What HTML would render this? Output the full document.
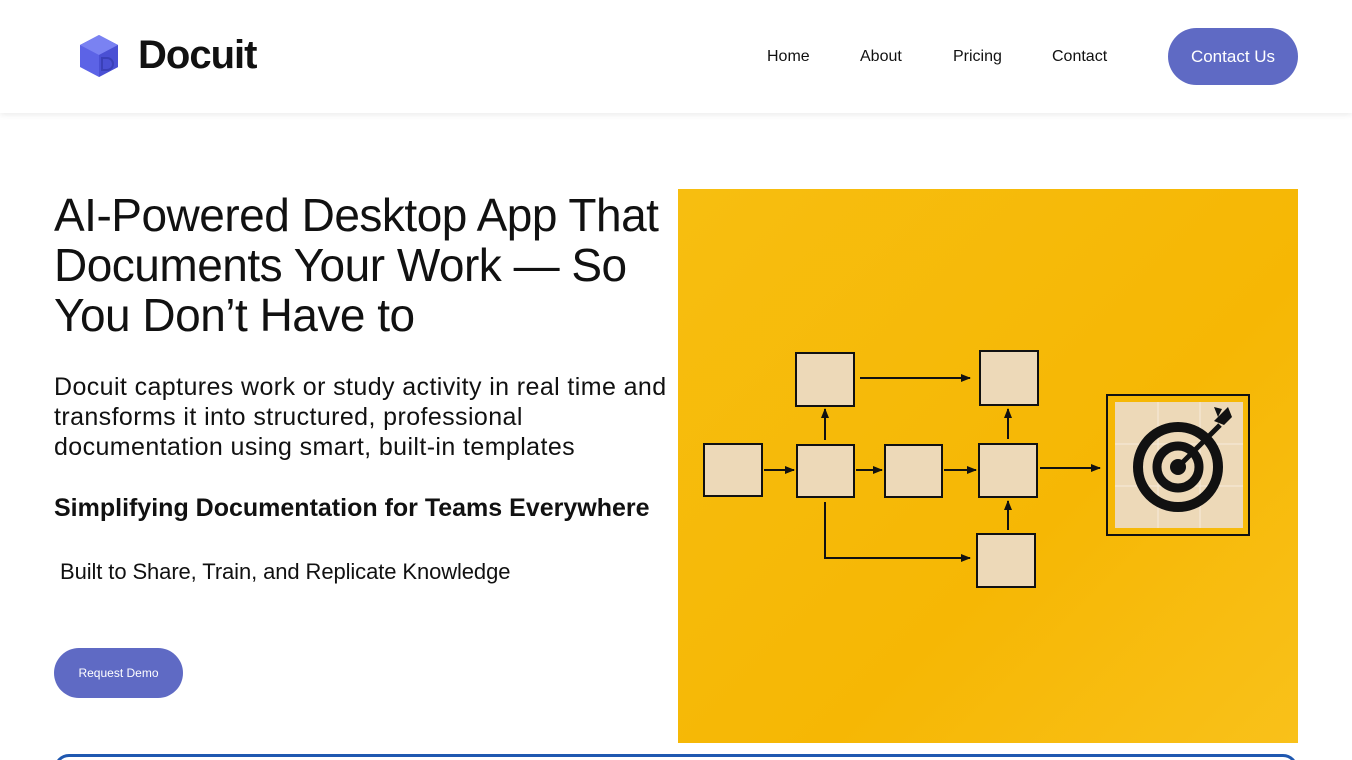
<!DOCTYPE html>
<html><head><meta charset="utf-8"><style>
*{margin:0;padding:0;box-sizing:border-box}
html,body{width:1352px;height:760px;overflow:hidden}
body{background:#fff;font-family:"Liberation Sans",sans-serif;position:relative;color:#111}
.hdr{position:absolute;left:0;top:0;width:1352px;height:113px;background:#fff;box-shadow:0 2px 6px rgba(0,0,0,.08)}
.logo{position:absolute;left:138px;top:33px;font-size:40px;font-weight:700;letter-spacing:-1px;color:#111}
.nav a{position:absolute;top:48px;font-size:16px;color:#111;text-decoration:none}
.cbtn{position:absolute;left:1168px;top:28px;width:130px;height:57px;border-radius:29px;background:#5f6ac4;color:#fff;font-size:17px;text-align:center;line-height:57px}
h1{position:absolute;left:54px;top:190px;width:625px;font-size:46px;font-weight:400;line-height:50px;letter-spacing:-0.5px;color:#111}
.p1{position:absolute;left:54px;top:372px;width:618px;font-size:25px;line-height:30px;letter-spacing:0.4px}
.p2{position:absolute;left:54px;top:494px;font-size:25px;font-weight:700;letter-spacing:0px}
.p3{position:absolute;left:60px;top:559px;font-size:22px;letter-spacing:-0.1px}
.rbtn{position:absolute;left:54px;top:648px;width:129px;height:50px;border-radius:25px;background:#5f6ac4;color:#fff;font-size:12px;text-align:center;line-height:50px}
.img{position:absolute;left:678px;top:189px;width:620px;height:554px;background:linear-gradient(135deg,#f7be10,#f6b704 60%,#f9c11a)}
.bot{position:absolute;left:54px;top:754px;width:1244px;height:30px;border:3px solid #1f58b0;border-radius:16px}
</style></head><body>
<div class="hdr">
<svg style="position:absolute;left:78px;top:34px" width="42" height="44" viewBox="0 0 42 44">
<polygon points="21,1 40,11 40,33 21,43 2,33 2,11" fill="#5c63e6"/>
<polygon points="21,1 40,11 21,21 2,11" fill="#7a82f2"/>
<polygon points="21,21 40,11 40,33 21,43" fill="#4a50d4"/>
<path d="M24,24 h5 a6,6 0 0 1 0,12 h-5 z" fill="none" stroke="#3a40b8" stroke-width="2"/>
</svg>
<div class="logo">Docuit</div>
<div class="nav"><a style="left:767px">Home</a><a style="left:860px">About</a><a style="left:953px">Pricing</a><a style="left:1052px">Contact</a></div>
<div class="cbtn">Contact Us</div>
</div>
<h1>AI-Powered Desktop App That Documents Your Work — So You Don’t Have to</h1>
<div class="p1">Docuit captures work or study activity in real time and transforms it into structured, professional documentation using smart, built-in templates</div>
<div class="p2">Simplifying Documentation for Teams Everywhere</div>
<div class="p3">Built to Share, Train, and Replicate Knowledge</div>
<div class="rbtn">Request Demo</div>
<div class="img">
<svg width="620" height="554" viewBox="0 0 620 554">
<defs><marker id="a" markerWidth="10" markerHeight="8" refX="9" refY="4" orient="auto" markerUnits="userSpaceOnUse"><path d="M0,0 L10,4 L0,8z" fill="#111"/></marker></defs>
<g fill="#edd9b8" stroke="#111" stroke-width="2">
<rect x="26" y="255" width="58" height="52"/><rect x="119" y="256" width="57" height="52"/>
<rect x="118" y="164" width="58" height="53"/><rect x="207" y="256" width="57" height="52"/>
<rect x="302" y="162" width="58" height="54"/><rect x="301" y="255" width="58" height="53"/>
<rect x="299" y="345" width="58" height="53"/>
<rect x="429" y="206" width="142" height="140" fill="none"/>
</g>
<rect x="437" y="213" width="128" height="126" fill="#edd9b8"/>
<g stroke="#fff" stroke-width="1" opacity=".5"><line x1="480" y1="213" x2="480" y2="339"/><line x1="522" y1="213" x2="522" y2="339"/><line x1="437" y1="255" x2="565" y2="255"/><line x1="437" y1="297" x2="565" y2="297"/></g>
<g stroke="#111" stroke-width="2" fill="none" marker-end="url(#a)">
<line x1="86" y1="281" x2="116" y2="281"/><line x1="178" y1="281" x2="204" y2="281"/>
<line x1="266" y1="281" x2="298" y2="281"/><line x1="362" y1="279" x2="422" y2="279"/>
<line x1="147" y1="251" x2="147" y2="220"/><line x1="182" y1="189" x2="292" y2="189"/>
<line x1="330" y1="250" x2="330" y2="220"/><line x1="330" y1="341" x2="330" y2="312"/>
<polyline points="147,313 147,369 292,369"/>
</g>
<g fill="none" stroke="#111">
<circle cx="500" cy="278" r="40" stroke-width="10"/>
<circle cx="500" cy="278" r="21" stroke-width="9"/>
</g>
<circle cx="500" cy="278" r="8" fill="#111"/>
<line x1="500" y1="278" x2="542" y2="236" stroke="#111" stroke-width="5"/>
<path d="M536,232 l14,-14 l4,10 l-8,8 z M540,228 l-4,-10 l8,2 z" fill="#111"/>
</svg>
</div>
<div class="bot"></div>
</body></html>
